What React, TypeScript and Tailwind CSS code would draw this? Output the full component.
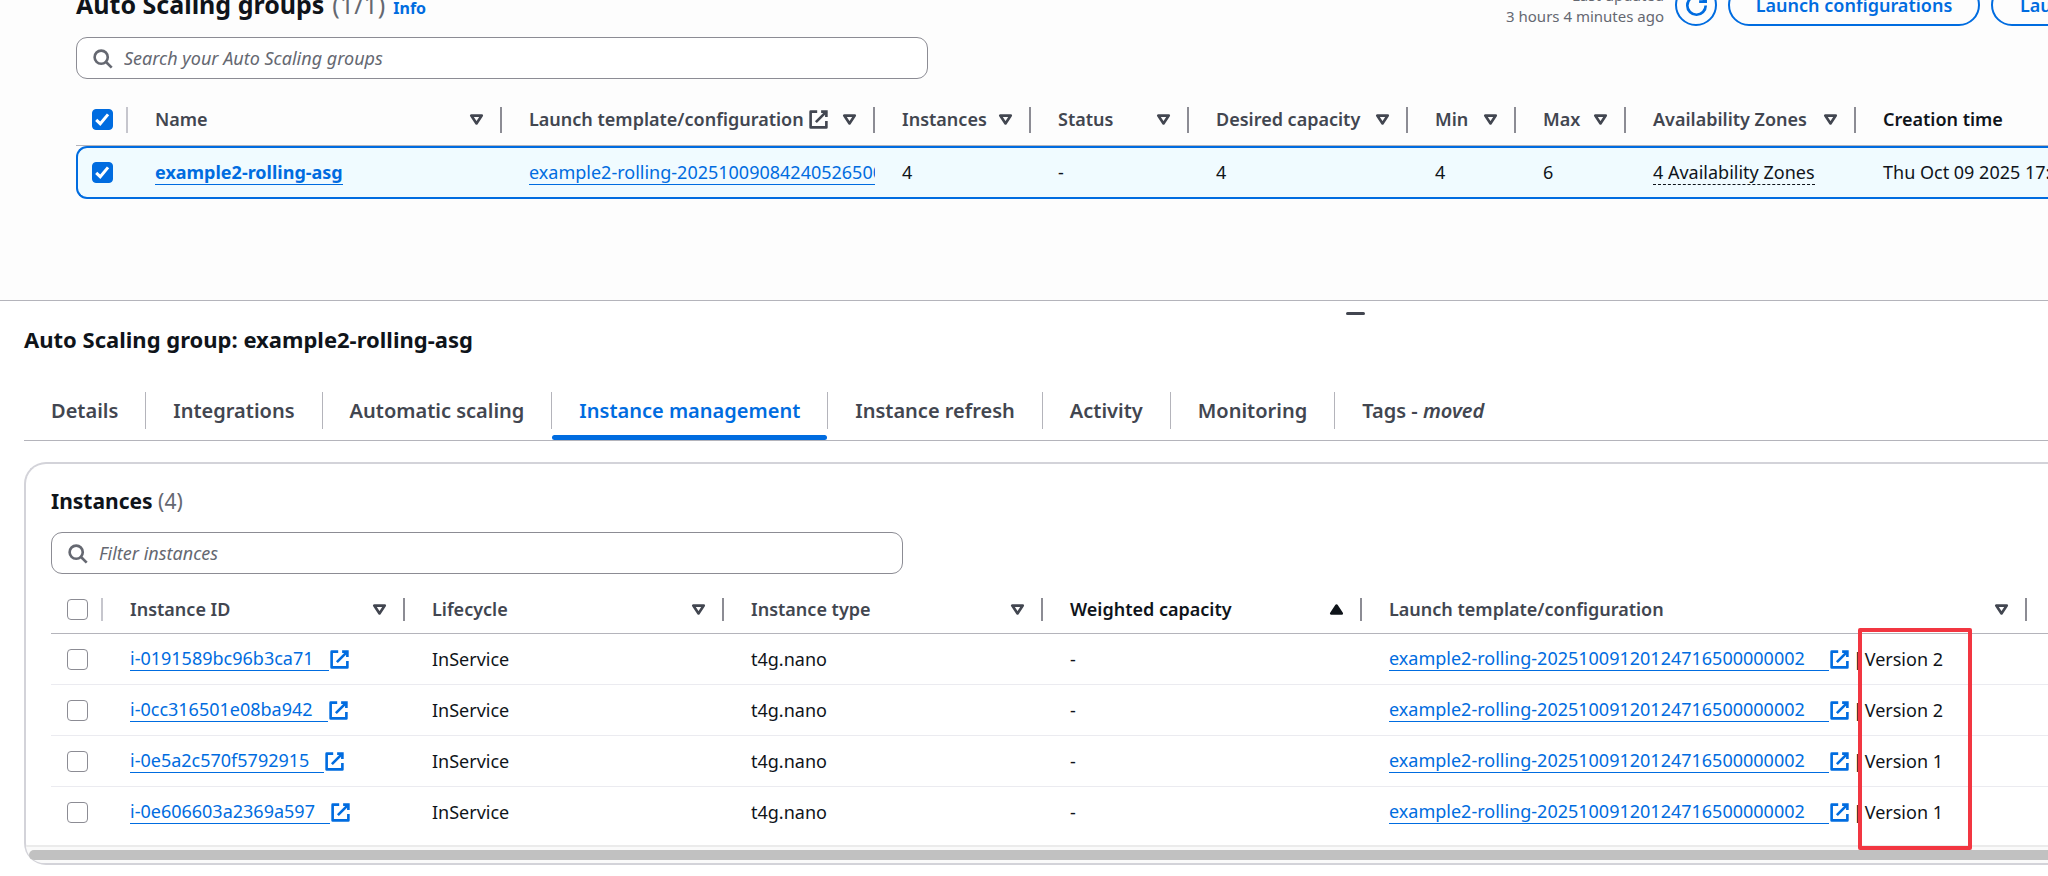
import React, { useState } from "react";

interface Instance {
  id: string;
  lifecycle: string;
  type: string;
  weight: string;
  template: string;
  version: string;
}

interface HeaderCellProps {
  label: string;
  active?: boolean;
  ascending?: boolean;
  external?: boolean;
  compact?: boolean;
}

const TEMPLATE = "example2-rolling-20251009120124716500000002";

const instances: Instance[] = [
  { id: "i-0191589bc96b3ca71", lifecycle: "InService", type: "t4g.nano", weight: "-", template: TEMPLATE, version: "Version 2" },
  { id: "i-0cc316501e08ba942", lifecycle: "InService", type: "t4g.nano", weight: "-", template: TEMPLATE, version: "Version 2" },
  { id: "i-0e5a2c570f5792915", lifecycle: "InService", type: "t4g.nano", weight: "-", template: TEMPLATE, version: "Version 1" },
  { id: "i-0e606603a2369a597", lifecycle: "InService", type: "t4g.nano", weight: "-", template: TEMPLATE, version: "Version 1" },
];

const tabs = [
  "Details",
  "Integrations",
  "Automatic scaling",
  "Instance management",
  "Instance refresh",
  "Activity",
  "Monitoring",
  "Tags",
];

const ExternalIcon = () => (
  <svg className="size-[21px] shrink-0" viewBox="0 0 16 16" fill="none" stroke="currentColor" strokeWidth="2">
    <path d="M10 2h4v4" />
    <path d="m6 10 8-8" />
    <path d="M14 9.048V14H2V2h5" strokeLinejoin="round" />
  </svg>
);

const SearchIcon = () => (
  <svg className="size-[21px] shrink-0 text-[#656871]" viewBox="0 0 16 16" fill="none" stroke="currentColor" strokeWidth="2">
    <circle cx="7" cy="7" r="5" />
    <path d="m15 15-4.5-4.5" />
  </svg>
);

const RefreshIcon = () => (
  <svg className="size-[21px] shrink-0" viewBox="0 0 16 16" fill="none" stroke="currentColor" strokeWidth="2">
    <path d="M10 5h5V0" />
    <path d="M15 8a6.957 6.957 0 0 1-7 7 6.957 6.957 0 0 1-7-7 6.957 6.957 0 0 1 7-7 6.87 6.87 0 0 1 6.3 4" />
  </svg>
);

const SortIcon = ({ ascending = false }: { ascending?: boolean }) => (
  <svg
    className="size-[21px] shrink-0"
    viewBox="0 0 16 16"
    fill={ascending ? "currentColor" : "none"}
    stroke="currentColor"
    strokeWidth="2"
    strokeLinejoin="round"
  >
    <path d={ascending ? "M4 11h8L8 5l-4 6z" : "M4 5h8l-4 6-4-6z"} />
  </svg>
);

const Checkbox = ({ label, defaultChecked = false }: { label: string; defaultChecked?: boolean }) => {
  const [checked, setChecked] = useState(defaultChecked);

  return (
    <span className="grid size-[21px]">
      <input
        type="checkbox"
        aria-label={label}
        checked={checked}
        onChange={(e) => setChecked(e.target.checked)}
        className="col-start-1 row-start-1 size-[21px] appearance-none rounded-[4px] border border-[#8c8c94] bg-white checked:border-[#006ce0] checked:bg-[#006ce0]"
      />
      {checked && (
        <svg className="pointer-events-none col-start-1 row-start-1 size-[21px]" viewBox="0 0 14 14" fill="none" stroke="white" strokeWidth="2">
          <path d="m2.8 7.2 2.7 2.6 5.2-6.2" />
        </svg>
      )}
    </span>
  );
};

const HeaderCell = ({ label, active, ascending, external, compact }: HeaderCellProps) => (
  <th scope="col" className="border-b border-[#b4b4bb] p-0 text-left font-semibold">
    <div className={`flex items-center border-r-2 border-[#8c8c94] ${compact ? "h-[23px]" : "h-[26px]"}`}>
      <button
        type="button"
        className={`flex w-full items-center justify-between pr-[13px] pl-[27px] font-semibold whitespace-nowrap ${active ? "text-[#0f141a]" : "text-[#424650]"}`}
      >
        <span className="flex items-center gap-1">
          {label}
          {external && <ExternalIcon />}
        </span>
        <SortIcon ascending={ascending} />
      </button>
    </div>
  </th>
);

const SearchBox = ({ id, placeholder }: { id: string; placeholder: string }) => (
  <label htmlFor={id} className="flex h-[42px] w-full max-w-[852px] items-center gap-[11px] rounded-[11px] border border-[#8c8c94] bg-white px-[15px]">
    <SearchIcon />
    <input
      id={id}
      type="search"
      placeholder={placeholder}
      className="w-full bg-transparent text-[18px] text-[#0f141a] outline-none placeholder:text-[#656871] placeholder:italic"
    />
  </label>
);

const selectedCell = "border-y-2 border-[#006ce0] bg-[#f0fbff] py-0 pl-[27px] pr-0 whitespace-nowrap";

const GroupsSection = () => (
  <section className="bg-[#fdfdfd] pb-[101px] pl-[76px]">
    <div className="-mt-4 mb-[11px] flex h-[42px] items-center justify-between">
      <h1 className="flex items-baseline gap-2 text-[25px] font-bold whitespace-nowrap">
        Auto Scaling groups <span className="font-normal text-[#656871]">(1/1)</span>
        <a href="#info" className="text-[16px] font-bold text-[#006ce0]">Info</a>
      </h1>
      <div className="-mr-[180px] flex shrink-0 items-center gap-[11px]">
        <p className="pt-0.5 text-right text-[15px] leading-[21px] text-[#656871]">
          Last updated
          <br />
          3 hours 4 minutes ago
        </p>
        <button type="button" aria-label="Refresh" className="flex size-[42px] items-center justify-center rounded-full border-2 border-[#006ce0] text-[#006ce0]">
          <RefreshIcon />
        </button>
        <button type="button" className="h-[42px] w-[252px] rounded-full border-2 border-[#006ce0] text-[18px] font-semibold text-[#006ce0]">
          Launch configurations
        </button>
        <button type="button" className="h-[42px] w-[237px] rounded-full border-2 border-[#006ce0] px-[27px] text-left text-[18px] font-semibold text-[#006ce0]">
          Launch templates
        </button>
      </div>
    </div>

    <SearchBox id="search-groups" placeholder="Search your Auto Scaling groups" />

    <table className="mt-[15px] w-[2240px] table-fixed border-separate border-spacing-0 text-[18px]">
      <colgroup>
        <col className="w-[52px]" />
        <col className="w-[374px]" />
        <col className="w-[373px]" />
        <col className="w-[156px]" />
        <col className="w-[158px]" />
        <col className="w-[219px]" />
        <col className="w-[108px]" />
        <col className="w-[110px]" />
        <col className="w-[230px]" />
        <col />
      </colgroup>
      <thead>
        <tr className="h-[52px]">
          <th scope="col" className="border-b border-[#b4b4bb] p-0">
            <div className="flex h-[26px] items-center border-r-2 border-[#c6c6cd] pl-4">
              <Checkbox label="Select all groups" defaultChecked />
            </div>
          </th>
          <HeaderCell label="Name" />
          <HeaderCell label="Launch template/configuration" external />
          <HeaderCell label="Instances" />
          <HeaderCell label="Status" />
          <HeaderCell label="Desired capacity" />
          <HeaderCell label="Min" />
          <HeaderCell label="Max" />
          <HeaderCell label="Availability Zones" />
          <HeaderCell label="Creation time" active ascending />
        </tr>
      </thead>
      <tbody>
        <tr className="h-[53px]">
          <td className="rounded-l-[11px] border-y-2 border-l-2 border-[#006ce0] bg-[#f0fbff] py-0 pr-0 pl-[14px]">
            <Checkbox label="Select example2-rolling-asg" defaultChecked />
          </td>
          <td className={selectedCell}>
            <a href="#group" className="inline-block border-b border-[#006ce0] leading-[23px] font-bold text-[#006ce0]">example2-rolling-asg</a>
          </td>
          <td className={selectedCell}>
            <a href="#template" className="block overflow-hidden border-b border-[#006ce0] leading-[23px] text-[#006ce0]">example2-rolling-20251009084240526500000002</a>
          </td>
          <td className={selectedCell}>4</td>
          <td className={selectedCell}>-</td>
          <td className={selectedCell}>4</td>
          <td className={selectedCell}>4</td>
          <td className={selectedCell}>6</td>
          <td className={selectedCell}>
            <button type="button" className="border-b border-dashed border-[#0f141a] leading-[23px]">4 Availability Zones</button>
          </td>
          <td className={selectedCell}>Thu Oct 09 2025 17:42:40 GMT+0900</td>
        </tr>
      </tbody>
    </table>
  </section>
);

const InstancesCard = () => (
  <div className="mt-[21px] rounded-l-[22px] border-y-2 border-l-2 border-[#d3d3d9] bg-white">
    <div className="pt-[22px] pl-[25px]">
      <h3 className="text-[21px] leading-[30px] font-bold">
        Instances <span className="font-normal text-[#656871]">(4)</span>
      </h3>
      <div className="mt-4">
        <SearchBox id="filter-instances" placeholder="Filter instances" />
      </div>

      <div className="relative mt-3 pb-[7px]">
        <table className="w-[2240px] table-fixed border-separate border-spacing-0 text-[18px]">
          <colgroup>
            <col className="w-[52px]" />
            <col className="w-[302px]" />
            <col className="w-[319px]" />
            <col className="w-[319px]" />
            <col className="w-[319px]" />
            <col className="w-[665px]" />
            <col />
          </colgroup>
          <thead>
            <tr className="h-[48px]">
              <th scope="col" className="border-b border-[#b4b4bb] p-0">
                <div className="flex h-[23px] items-center border-r-2 border-[#c6c6cd] pl-4">
                  <Checkbox label="Select all instances" />
                </div>
              </th>
              <HeaderCell label="Instance ID" compact />
              <HeaderCell label="Lifecycle" compact />
              <HeaderCell label="Instance type" compact />
              <HeaderCell label="Weighted capacity" active ascending compact />
              <HeaderCell label="Launch template/configuration" compact />
              <HeaderCell label="Availability Zone" compact />
            </tr>
          </thead>
          <tbody className="[&_td]:border-b [&_td]:border-[#ebebf0] [&_td]:p-0 [&_td]:whitespace-nowrap [&_tr:last-child_td]:border-transparent">
            {instances.map((item) => (
              <tr key={item.id} className="h-[51px]">
                <td>
                  <div className="pl-4">
                    <Checkbox label={`Select ${item.id}`} />
                  </div>
                </td>
                <td>
                  <div className="flex items-center pl-[27px]">
                    <a href="#instance" className="flex items-center text-[#006ce0]">
                      <span className="border-b border-[#006ce0] pr-[15px] leading-[23px]">{item.id}</span>
                      <ExternalIcon />
                    </a>
                  </div>
                </td>
                <td><span className="pl-[27px]">{item.lifecycle}</span></td>
                <td><span className="pl-[27px]">{item.type}</span></td>
                <td><span className="pl-[27px]">{item.weight}</span></td>
                <td>
                  <div className="flex items-center pl-[27px]">
                    <a href="#template" className="flex items-center text-[#006ce0]">
                      <span className="border-b border-[#006ce0] pr-6 leading-[23px]">{item.template}</span>
                      <ExternalIcon />
                    </a>
                    <span className="pl-[3px]">|</span>
                    <span className="pl-0.5">{item.version}</span>
                  </div>
                </td>
                <td><span className="pl-[27px]">us-east-1a</span></td>
              </tr>
            ))}
          </tbody>
        </table>
        {/* Highlight around the version values */}
        <div className="pointer-events-none absolute top-[42px] left-[1807px] h-[222px] w-[114px] rounded-[2px] border-4 border-[#f23641]" />
      </div>
    </div>
    <div className="rounded-bl-[20px] border-t-2 border-[#ebebeb] bg-[#fafafa] pt-[3px] pb-[3px] pl-[3px]">
      <div className="h-[10px] rounded-l-full bg-[#c1c1c1]" />
    </div>
  </div>
);

const DetailsPanel = () => {
  const [activeTab, setActiveTab] = useState("Instance management");

  return (
    <section className="border-t border-[#b4b4bb] bg-white pb-3 pl-6">
      <div className="flex h-6 items-center">
        <button type="button" aria-label="Resize panel" className="ml-[65.3%] h-[3px] w-[19px] rounded-full bg-[#424650]" />
      </div>
      <h2 className="text-[22px] leading-[28px] font-bold">Auto Scaling group: example2-rolling-asg</h2>

      <div role="tablist" className="mt-[39px] flex border-b border-[#b4b4bb]">
        {tabs.map((tab, i) => (
          <div key={tab} className="flex h-[48px] flex-col justify-between">
            <div className={`flex h-[37px] items-center ${i < tabs.length - 1 ? "border-r border-[#b4b4bb]" : ""}`}>
              <button
                type="button"
                role="tab"
                aria-selected={tab === activeTab}
                onClick={() => setActiveTab(tab)}
                className={`px-[27px] text-[20px] font-semibold whitespace-nowrap ${tab === activeTab ? "text-[#006ce0]" : "text-[#424650]"}`}
              >
                {tab}
                {tab === "Tags" && <> - <em>moved</em></>}
              </button>
            </div>
            {tab === activeTab && <div className="mr-px h-[5px] rounded-full bg-[#006ce0]" />}
          </div>
        ))}
      </div>

      <InstancesCard />
    </section>
  );
};

export default function App() {
  return (
    <main className="min-h-screen overflow-hidden bg-white font-['Noto_Sans',sans-serif] text-[#0f141a]">
      <GroupsSection />
      <DetailsPanel />
    </main>
  );
}
